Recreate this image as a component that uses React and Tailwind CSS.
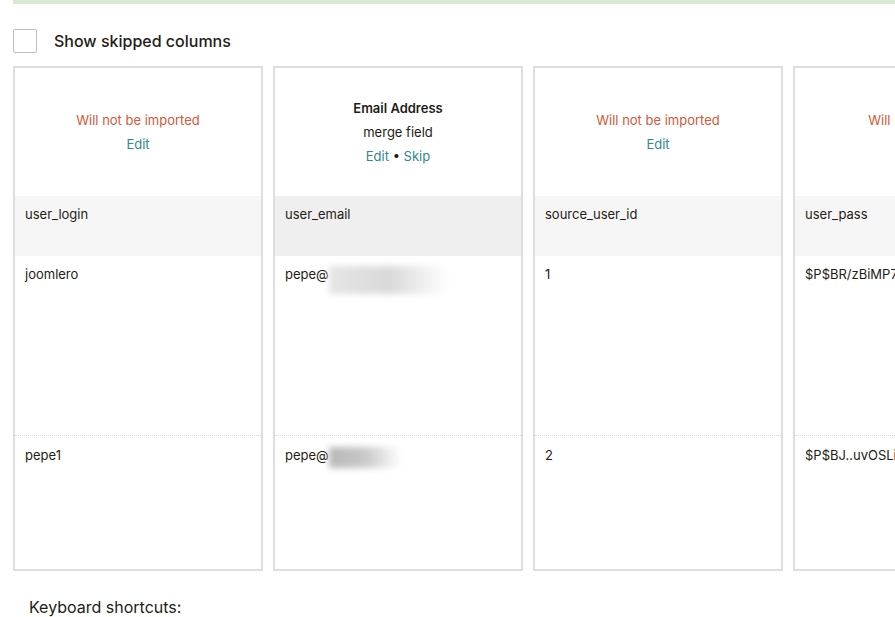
import React from 'react';

const columns = [
    { skipped: true, name: 'user_login', values: ['joomlero', 'pepe1'] },
    { skipped: false, label: 'Email Address', type: 'merge field', name: 'user_email', values: ['email1', 'email2'], active: true },
    { skipped: true, name: 'source_user_id', values: ['1', '2'] },
    { skipped: true, name: 'user_pass', values: ['$P$BR/zBiMP7pQk2', '$P$BJ..uvOSLi1eW'], wide: true },
];

function Cell({ value }) {
    if (value === 'email1' || value === 'email2') {
        return (
            <div className="flex items-start">
                <span>pepe@</span>
                <span
                    className={
                        value === 'email1'
                            ? 'mt-[2px] h-[28px] w-[120px] bg-gradient-to-r from-[#e6e6e6] via-[#d9d9d9] to-transparent blur-[3px]'
                            : 'mt-[2px] h-[21px] w-[72px] bg-gradient-to-r from-[#b8b8b8] via-[#c8c8c8] to-transparent blur-[3px]'
                    }
                />
            </div>
        );
    }
    return <span className="whitespace-nowrap">{value}</span>;
}

function Column({ col }) {
    return (
        <div
            className={`${col.wide ? 'w-[274px]' : 'w-[250px]'} h-[505px] shrink-0 border-2 border-[#dedede] bg-white flex flex-col`}
        >
            <div className="h-[128px] flex flex-col items-center justify-center text-[13px] leading-[24px]">
                {col.skipped ? (
                    <>
                        <span className="text-[#d4583a]">Will not be imported</span>
                        <span className="text-[#2f8892]">Edit</span>
                    </>
                ) : (
                    <>
                        <span className="font-semibold text-[#241c15]">{col.label}</span>
                        <span className="text-[#241c15]">{col.type}</span>
                        <span className="text-[#2f8892]">
                            Edit <span className="text-[#241c15]">•</span> Skip
                        </span>
                    </>
                )}
            </div>
            <div
                className={`h-[60px] px-[10px] pt-2 text-[13px] leading-[20px] text-[#241c15] ${col.active ? 'bg-[#efefef]' : 'bg-[#f6f6f6]'}`}
            >
                {col.name}
            </div>
            <div className="h-[180px] px-[10px] pt-2 text-[13px] leading-[20px] text-[#241c15] border-b border-dotted border-[#d8d8d8] overflow-hidden">
                <Cell value={col.values[0]} />
            </div>
            <div className="flex-1 px-[10px] pt-[9px] text-[13px] leading-[20px] text-[#241c15] overflow-hidden">
                <Cell value={col.values[1]} />
            </div>
        </div>
    );
}

export default function App() {
    return (
        <div
            className="w-[895px] h-[617px] overflow-hidden bg-white"
            style={{ fontFamily: 'Inter, "Liberation Sans", sans-serif' }}
        >
            <div className="ml-[13px] h-[4px] bg-[#dce9d2]" />
            <div className="ml-[13px] mt-[25px] flex items-center">
                <div className="w-6 h-6 border border-[#bdbdbd] rounded-[2px] bg-white" />
                <span className="ml-[17px] text-[16px] font-medium text-[#241c15]">Show skipped columns</span>
            </div>
            <div className="ml-[13px] mt-[13px] flex gap-[10px]">
                {columns.map((c) => (
                    <Column key={c.name} col={c} />
                ))}
            </div>
            <div className="ml-[29px] mt-[24px] text-[16px] text-[#241c15]">Keyboard shortcuts:</div>
        </div>
    );
}
